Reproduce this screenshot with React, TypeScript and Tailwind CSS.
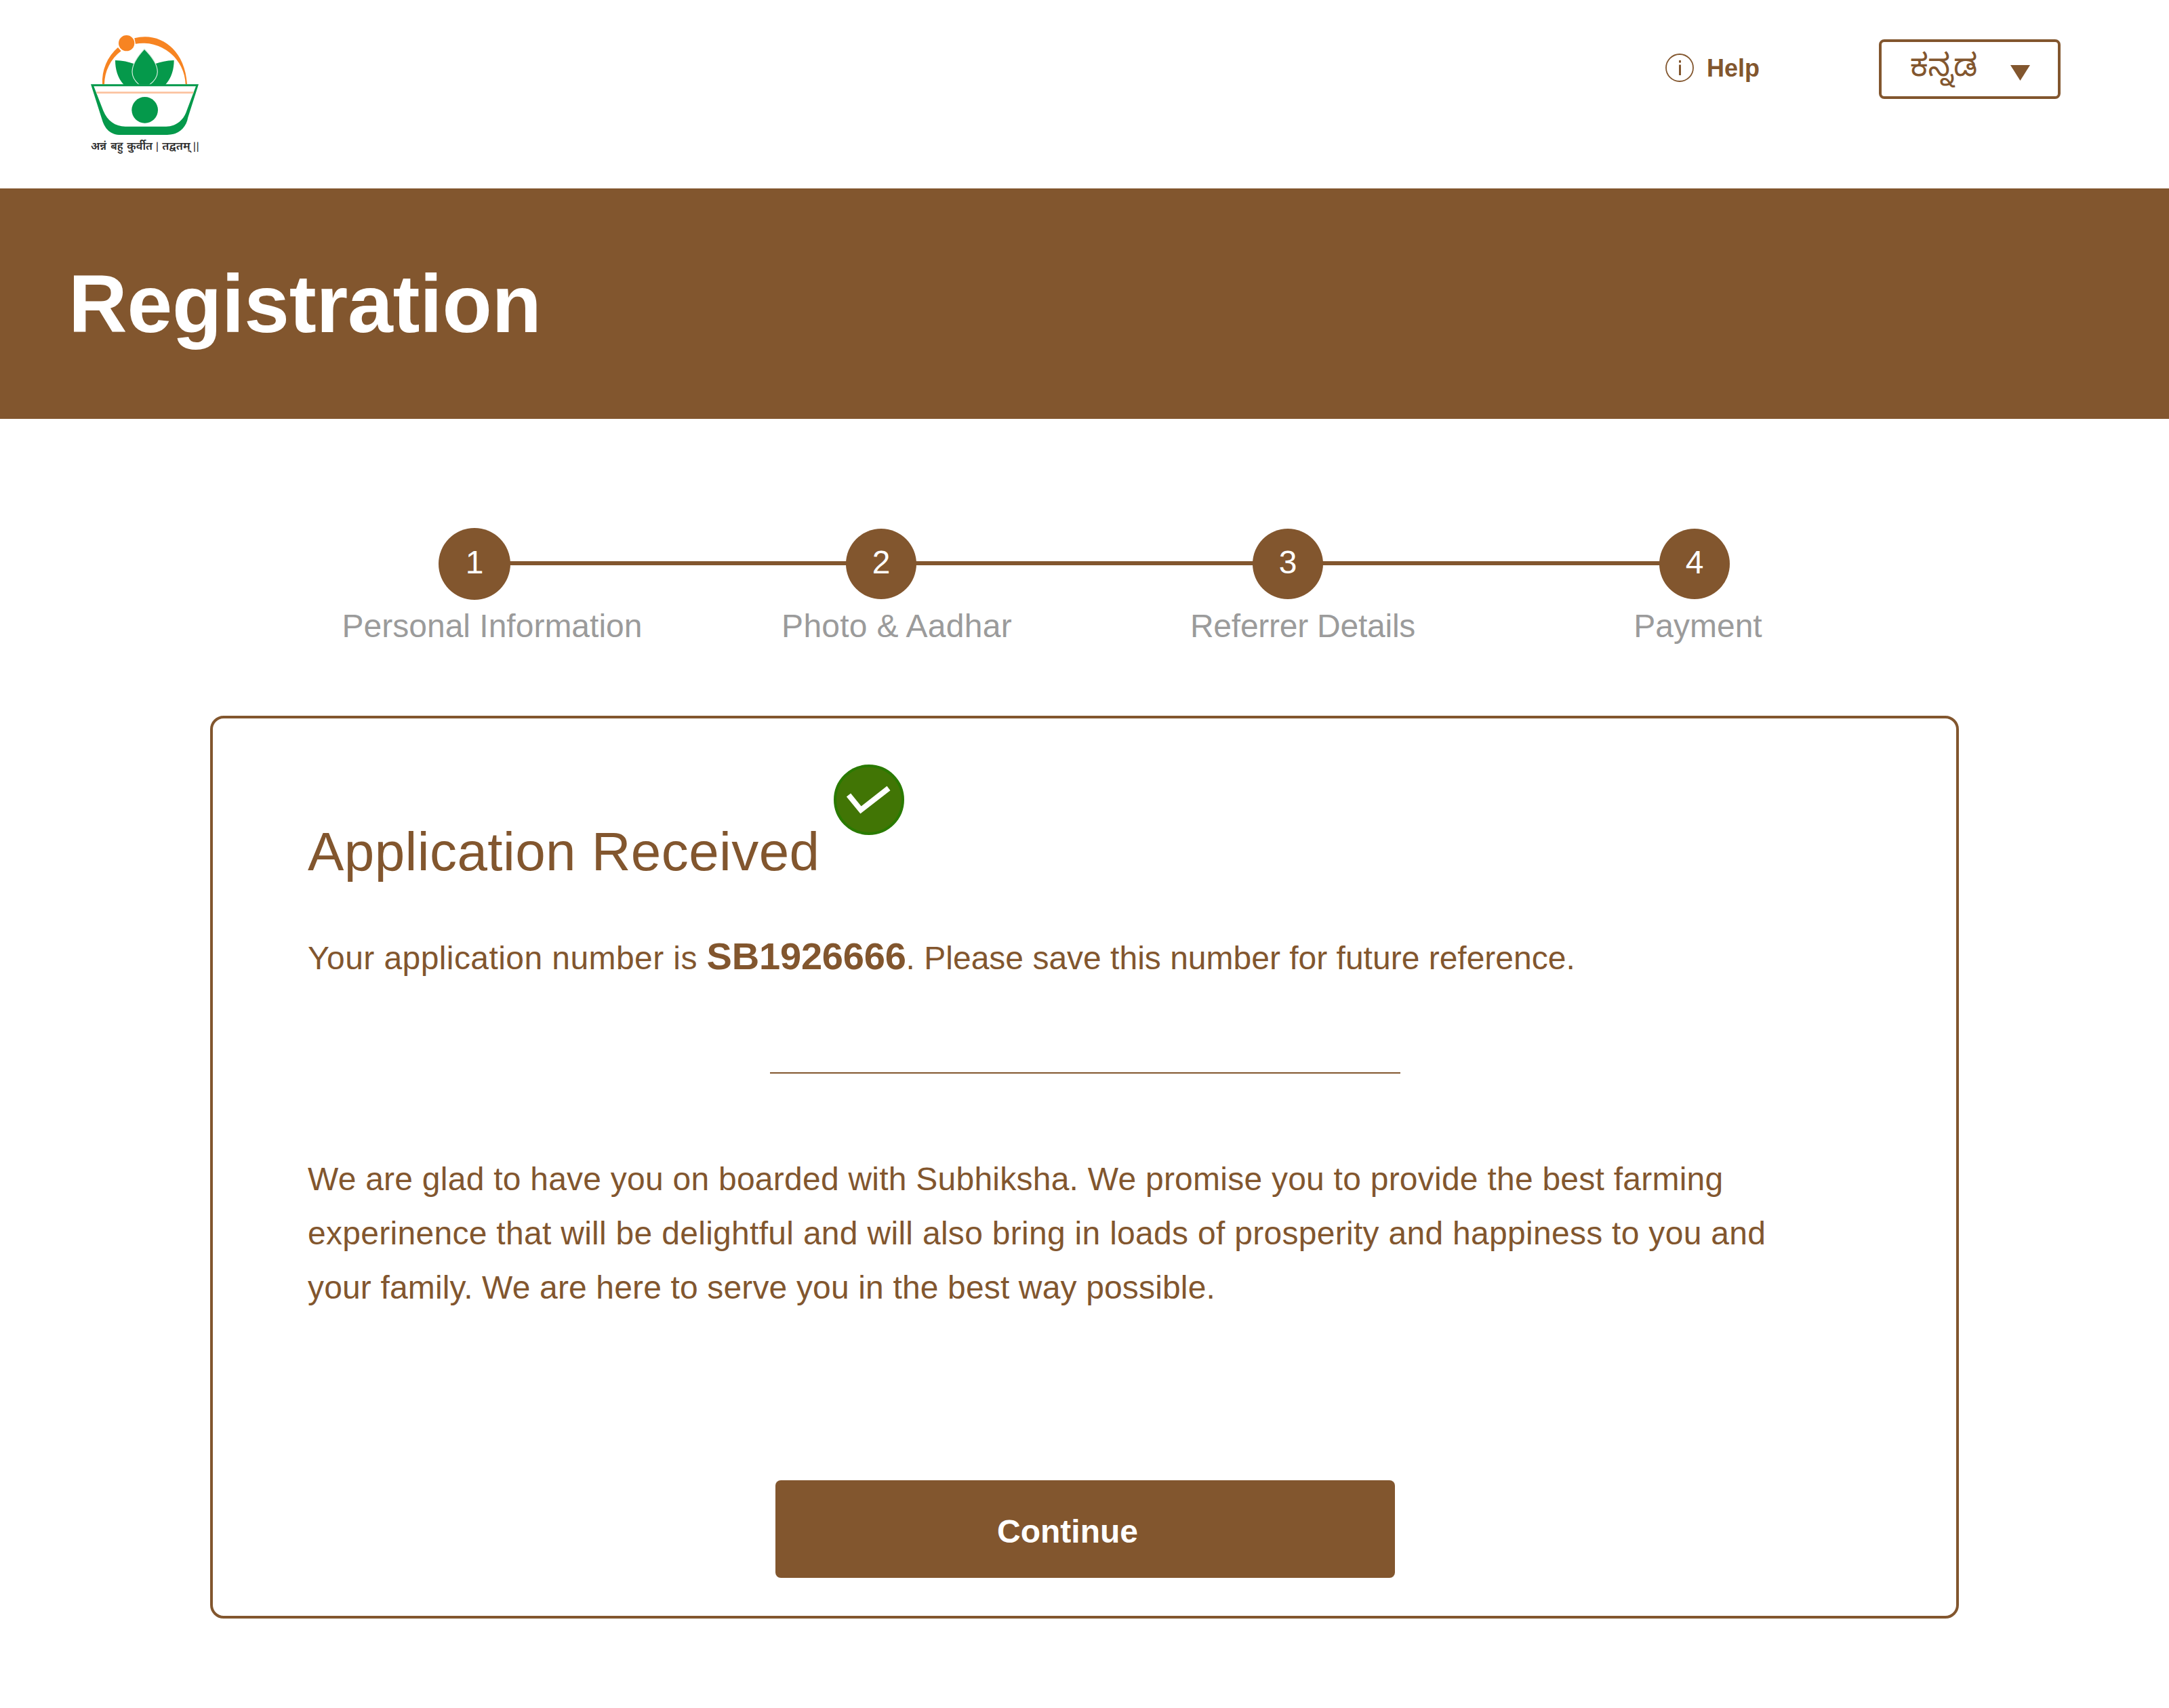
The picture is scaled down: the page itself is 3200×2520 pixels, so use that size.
import React from "react";

const steps = [
  { n: "1", label: "Personal Information", place: "left-[26px]" },
  { n: "2", label: "Photo & Aadhar", place: "left-[23px] tracking-[0.25px]" },
  { n: "3", label: "Referrer Details", place: "left-[22px] tracking-[-0.25px]" },
  { n: "4", label: "Payment", place: "left-[5px]" },
];

const motto = [
  { x: 72, w: 69, t: "अन्नं" },
  { x: 160, w: 55, t: "बहु" },
  { x: 232, w: 113, t: "कुर्वीत" },
  { x: 388, w: 124, t: "तद्वतम्" },
];

function Logo() {
  return (
    <svg className="h-[210px] w-[210px]" viewBox="0 0 630 630" role="img" aria-label="Subhiksha">
      <g fill="#f78422">
        <circle cx="230" cy="101" r="35" />
        <path d="M123 283A200 200 0 0 1 192 120L206 136A186 186 0 0 0 132 283Z" />
        <path d="M265 79C370 50 488 120 498 283H491A188 188 0 0 0 270 104Z" />
      </g>
      <g fill="#05994b">
        <path d="M180 177C212 178 240 184 262 192C252 220 252 258 287 285H218C190 255 180 215 180 177Z" />
        <path d="M440 177C408 178 380 184 358 192C368 220 368 258 333 285H402C430 255 440 215 440 177Z" />
        <path d="M309 127C340 158 367 192 367 228C367 250 352 270 331 286H287C268 270 255 250 255 228C255 192 280 158 309 127Z" stroke="#d9efe2" strokeWidth="3.5" />
        <path fillRule="evenodd" d="M72 283H549L502 430C494 475 462 507 410 507H205C158 507 134 480 122 440ZM85 292L127 400C145 445 180 470 225 470H405C450 470 485 440 498 395L537 292Z" />
        <circle cx="311" cy="397" r="58" />
      </g>
      <path d="M97 320H526" stroke="#fbc3a0" strokeWidth="8" />
      <g fontSize="50" fontWeight="600" fill="#2b2b2b" fontFamily="'Noto Sans Devanagari', 'Noto Sans', sans-serif">
        {motto.map((m) => (
          <text key={m.x} x={m.x} y="573" textLength={m.w} lengthAdjust="spacingAndGlyphs">
            {m.t}
          </text>
        ))}
        <g fontSize="41" textAnchor="middle">
          <text x="366" y="575">|</text>
          <text x="534" y="575" letterSpacing="-8">||</text>
        </g>
      </g>
    </svg>
  );
}

function Header() {
  return (
    <header className="flex h-[278px] items-start pt-[30px] pr-[160px] pl-[110px]">
      <Logo />
      <div className="ml-auto flex items-start">
        <a className="mt-[49px] mr-[176px] flex items-start gap-[19px]">
          <svg className="h-[42px] w-[42px]" viewBox="0 0 42 42" fill="none" stroke="#82562e">
            <circle cx="21" cy="21" r="20" strokeWidth="1.8" />
            <path d="M21.5 10V13.5M21.5 16.5V32" strokeWidth="3" />
          </svg>
          <span className="pt-px text-4xl leading-[42px] font-bold">Help</span>
        </a>
        <button className="mt-[28px] flex h-[88px] w-[268px] items-start justify-between rounded-lg border-4 border-[#82562e] pr-[41px] pl-[42px]">
          <span className="font-['Noto_Sans_Kannada','Noto_Sans',sans-serif] text-[46px] leading-[88px]">ಕನ್ನಡ</span>
          <svg className="mt-[34px] h-[23px] w-[29px]" viewBox="0 0 29 23" fill="#82562e">
            <path d="M0 0H29L14.5 23Z" />
          </svg>
        </button>
      </div>
    </header>
  );
}

function Stepper() {
  return (
    <ol className="mt-[161px] flex h-[277px] pl-[400px]">
      {steps.map((s, i) => (
        <li key={s.n} className="relative flex w-[600px] flex-col items-center">
          {i < steps.length - 1 && <span className="absolute top-[49px] left-[300px] h-1.5 w-[600px] bg-[#82562e]" />}
          <span className="flex h-[106px] items-center">
            <span
              className={
                i === 0
                  ? "relative flex size-[106px] justify-center rounded-full bg-[#82562e] pt-[24px] text-5xl leading-[53px] text-white"
                  : "relative flex size-[104px] justify-center rounded-full bg-[#82562e] pt-[23px] text-5xl leading-[53px] text-white"
              }
            >
              {s.n}
            </span>
          </span>
          <span className={`relative ${s.place} mt-[12px] text-5xl leading-[53px] whitespace-nowrap text-[#9b9b9b]`}>{s.label}</span>
        </li>
      ))}
    </ol>
  );
}

function Card() {
  return (
    <section className="mx-[310px] flex h-[1332px] flex-col rounded-[20px] border-4 border-[#82562e] pl-[140px]">
      <div className="mt-[68px] flex">
        <h2 className="mt-[83px] w-[756px] text-[80px] leading-[91px] tracking-[0.42px] whitespace-nowrap">Application Received</h2>
        <svg className="ml-[20px] size-[104px]" viewBox="0 0 104 104">
          <circle cx="52" cy="52" r="50" fill="#417505" stroke="#2a7a00" strokeWidth="4" />
          <path d="M22 45L40 67L81 35" fill="none" stroke="#fff" strokeWidth="8" />
        </svg>
      </div>
      <p className="mt-[77px] h-[63px] text-5xl leading-[63px] whitespace-nowrap">
        <span className="tracking-[0.42px]">Your application number is </span>
        <strong className="text-[56px] tracking-[-0.2px]">SB1926666</strong>. Please save this number for future reference.
      </p>
      <hr className="mt-[140px] ml-[682px] w-[930px] border-t-2 border-[#82562e]" />
      <p className="mt-[116px] text-5xl leading-[80px] whitespace-nowrap">
        <span className="block tracking-[0.24px]">
          We are glad to have you on boarded with Subhiksha. We promise you to provide the best farming
        </span>
        <span className="block tracking-[0.29px]">
          experinence that will be delightful and will also bring in loads of prosperity and happiness to you and
        </span>
        <span className="block tracking-[0.15px]">your family. We are here to serve you in the best way possible.</span>
      </p>
      <button className="mt-auto mb-[56px] ml-[690px] flex h-[144px] w-[914px] items-start rounded-lg bg-[#82562e] pt-[49px] pl-[327px] text-5xl leading-[53px] font-bold text-white">
        Continue
      </button>
    </section>
  );
}

export default function App() {
  return (
    <div className="h-[2520px] w-[3200px] overflow-hidden bg-white font-['Liberation_Sans',Arial,sans-serif] text-[#82562e]">
      <Header />
      <div className="h-[340px] bg-[#82562e] pt-[103px] pl-[101px]">
        <h1 className="text-[120px] leading-[134px] font-bold tracking-[-0.2px] text-white">Registration</h1>
      </div>
      <Stepper />
      <Card />
    </div>
  );
}
